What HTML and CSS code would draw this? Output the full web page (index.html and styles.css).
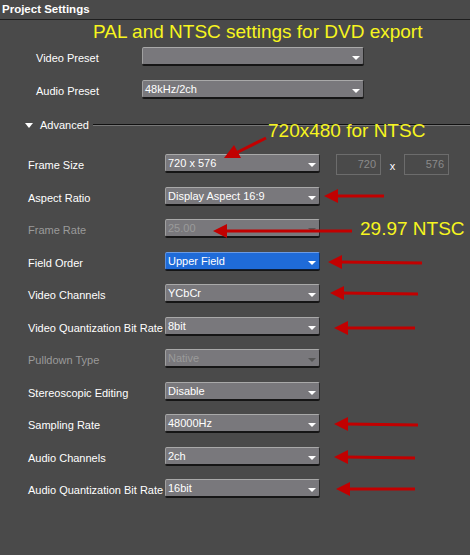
FILE: index.html
```
<!DOCTYPE html>
<html>
<head>
    <title>Project Settings</title>
    <link rel="stylesheet" href="styles.css">
</head>
<body>
    <div class="window">
        <div class="titlebar">Project Settings</div>
        <div class="note-top">PAL and NTSC settings for DVD export</div>

        <div class="presets">
            <div class="preset-row">
                <span class="label">Video Preset</span>
                <div class="select"><span class="value"></span><i class="caret"></i></div>
            </div>
            <div class="preset-row">
                <span class="label">Audio Preset</span>
                <div class="select"><span class="value">48kHz/2ch</span><i class="caret"></i></div>
            </div>
        </div>

        <div class="group-head">
            <span class="tri"></span>
            <span class="group-title">Advanced</span>
            <span class="rule"></span>
        </div>

        <div class="rows">
            <div class="row">
                <span class="label">Frame Size</span>
                <div class="select"><span class="value">720 x 576</span><i class="caret"></i></div>
                <div class="size">
                    <span class="num">720</span>
                    <span class="times">x</span>
                    <span class="num">576</span>
                </div>
            </div>
            <div class="row">
                <span class="label">Aspect Ratio</span>
                <div class="select"><span class="value">Display Aspect 16:9</span><i class="caret"></i></div>
            </div>
            <div class="row disabled">
                <span class="label">Frame Rate</span>
                <div class="select"><span class="value">25.00</span><i class="caret"></i></div>
            </div>
            <div class="row">
                <span class="label">Field Order</span>
                <div class="select active"><span class="value">Upper Field</span><i class="caret"></i></div>
            </div>
            <div class="row">
                <span class="label">Video Channels</span>
                <div class="select"><span class="value">YCbCr</span><i class="caret"></i></div>
            </div>
            <div class="row">
                <span class="label">Video Quantization Bit Rate</span>
                <div class="select"><span class="value">8bit</span><i class="caret"></i></div>
            </div>
            <div class="row disabled">
                <span class="label">Pulldown Type</span>
                <div class="select"><span class="value">Native</span><i class="caret"></i></div>
            </div>
            <div class="row">
                <span class="label">Stereoscopic Editing</span>
                <div class="select"><span class="value">Disable</span><i class="caret"></i></div>
            </div>
            <div class="row">
                <span class="label">Sampling Rate</span>
                <div class="select"><span class="value">48000Hz</span><i class="caret"></i></div>
            </div>
            <div class="row">
                <span class="label">Audio Channels</span>
                <div class="select"><span class="value">2ch</span><i class="caret"></i></div>
            </div>
            <div class="row">
                <span class="label">Audio Quantization Bit Rate</span>
                <div class="select"><span class="value">16bit</span><i class="caret"></i></div>
            </div>
        </div>

        <!-- annotations drawn over the dialog -->
        <div class="note note-size">720x480 for NTSC</div>
        <div class="note note-rate">29.97 NTSC</div>
        <svg class="arrows" width="470" height="555" viewBox="0 0 470 555">
            <g stroke="#c20000" stroke-width="3" fill="none">
                <line x1="266" y1="138" x2="236" y2="153"/>
                <line x1="384" y1="196" x2="336" y2="196"/>
                <line x1="352" y1="231" x2="225" y2="231"/>
                <line x1="422" y1="263" x2="340" y2="262"/>
                <line x1="418" y1="294" x2="342" y2="293"/>
                <line x1="415" y1="328" x2="346" y2="328"/>
                <line x1="418" y1="425" x2="346" y2="424"/>
                <line x1="415" y1="458" x2="346" y2="457"/>
                <line x1="415" y1="489" x2="348" y2="489"/>
            </g>
            <g fill="#c20000">
                <polygon points="224,158 234,145 241,158"/>
                <polygon points="324,196 338,189 338,203"/>
                <polygon points="213,231 227,224 227,238"/>
                <polygon points="328,262 342,255 342,269"/>
                <polygon points="330,293 344,286 344,300"/>
                <polygon points="334,328 348,321 348,335"/>
                <polygon points="334,424 348,417 348,431"/>
                <polygon points="334,457 348,450 348,464"/>
                <polygon points="336,489 350,482 350,496"/>
            </g>
        </svg>
    </div>
</body>
</html>
```

FILE: styles.css
```
body {
    margin: 0;
    background-color: #4a4a4a;
    font-family: "Liberation Sans", Arial, sans-serif;
    font-size: 11px;
    color: #fff;
}

.window {
    position: relative;
    width: 470px;
    height: 555px;
    overflow: hidden;
}

.titlebar {
    height: 19px;
    line-height: 18px;
    padding-left: 2px;
    font-size: 11.5px;
    font-weight: bold;
    border-bottom: 1px solid #1e1e1e;
}

.note-top {
    margin: 2px 0 0 93px;
    height: 20px;
    line-height: 20px;
    font-size: 19px;
    color: #f7f51e;
}

.note {
    position: absolute;
    font-size: 19px;
    line-height: 20px;
    color: #f7f51e;
}

.note-size {
    left: 268px;
    top: 121px;
}

.note-rate {
    left: 360px;
    top: 219px;
}

.arrows {
    position: absolute;
    left: 0;
    top: 0;
}

.presets {
    padding: 5px 0 0 36px;
    display: flex;
    flex-direction: column;
    gap: 14px;
}

.preset-row {
    display: grid;
    grid-template-columns: 106px 222px;
    align-items: start;
    height: 19px;
}

.label {
    padding-top: 5px;
    white-space: nowrap;
}

.select {
    position: relative;
    box-sizing: border-box;
    height: 18px;
    line-height: 16px;
    padding-left: 2px;
    background-color: #79787c;
    border: 1px solid;
    border-color: #a9a9a9 #2a2a2a #161616 #a0a0a0;
    border-radius: 2px;
    box-shadow: 0 1px 0 #151515;
    white-space: nowrap;
    overflow: hidden;
}

.caret {
    position: absolute;
    right: 3px;
    bottom: 4px;
    width: 0;
    height: 0;
    border-left: 4px solid transparent;
    border-right: 4px solid transparent;
    border-top: 4px solid #fff;
}

.select.active {
    background-color: #1f6bd8;
    border-color: #6b9be4 #12356a #0e1e38 #5b8fdc;
}

.disabled .label,
.disabled .value {
    color: #9a9a9a;
}

.disabled .caret {
    border-top-color: #555;
}

.group-head {
    display: flex;
    align-items: center;
    gap: 7px;
    height: 12px;
    margin-top: 20px;
    padding-left: 25px;
}

.tri {
    width: 0;
    height: 0;
    border-left: 4px solid transparent;
    border-right: 4px solid transparent;
    border-top: 5px solid #fff;
}

.group-title {
    line-height: 12px;
}

.rule {
    flex: 1;
    height: 1px;
    margin-left: -3px;
    border-top: 1px solid #111;
    background-color: #777;
}

.rows {
    margin-top: 23px;
    padding-left: 28px;
    display: grid;
    grid-auto-rows: 19px;
    row-gap: 13.5px;
}

.row {
    display: grid;
    grid-template-columns: 137px 155px auto;
    align-items: start;
}

.size {
    display: flex;
    align-items: center;
    margin-left: 16px;
}

.num {
    box-sizing: border-box;
    width: 45px;
    height: 21px;
    line-height: 19px;
    padding-right: 4px;
    text-align: right;
    color: #8a8a8a;
    border: 1px solid #6c6c6c;
}

.times {
    width: 23px;
    text-align: center;
    padding-top: 3px;
}
```
